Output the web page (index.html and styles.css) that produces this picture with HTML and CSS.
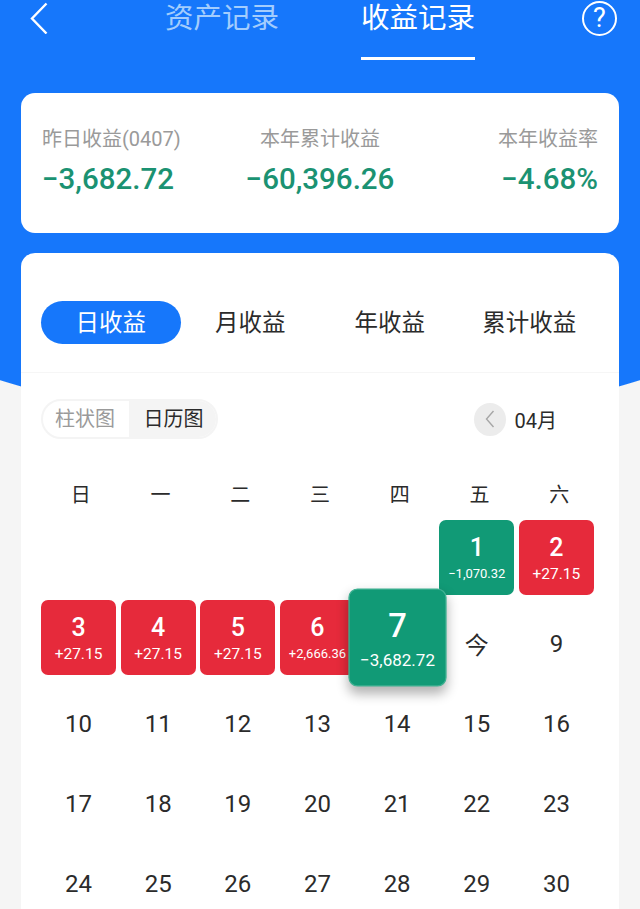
FILE: index.html
```html
<!DOCTYPE html>
<html lang="zh-CN">
<head>
  <meta charset="UTF-8">
  <meta name="viewport" content="width=device-width, initial-scale=1.0">
  <title>收益记录</title>
  <link rel="stylesheet" href="styles.css">
</head>
<body>
  <div class="header">
    <svg class="back-icon" viewBox="0 0 18 32" fill="none" stroke="white" stroke-width="2.4">
      <path d="M16.5 1.5L2 16.5l14.5 15"></path>
    </svg>
    <div class="header-tabs">
      <div class="header-tab">资产记录</div>
      <div class="header-tab active">收益记录</div>
    </div>
    <div class="help-icon">?</div>
  </div>

  <div class="summary card">
    <div class="summary-item">
      <div class="summary-label">昨日收益(0407)</div>
      <div class="summary-value">−3,682.72</div>
    </div>
    <div class="summary-item center">
      <div class="summary-label">本年累计收益</div>
      <div class="summary-value">−60,396.26</div>
    </div>
    <div class="summary-item right">
      <div class="summary-label">本年收益率</div>
      <div class="summary-value">−4.68%</div>
    </div>
  </div>

  <div class="calendar-card card">
    <div class="period-tabs">
      <div class="period-tab active">日收益</div>
      <div class="period-tab">月收益</div>
      <div class="period-tab">年收益</div>
      <div class="period-tab">累计收益</div>
    </div>

    <div class="controls">
      <div class="view-toggle">
        <div class="view-option">柱状图</div>
        <div class="view-option active">日历图</div>
      </div>
      <div class="month-picker">
        <div class="month-prev">
          <svg viewBox="0 0 12 20" fill="none" stroke="#a6a6a6" stroke-width="1.4">
            <path d="M9.5 2L2.5 10l7 8"></path>
          </svg>
        </div>
        <span>04月</span>
      </div>
    </div>

    <div class="weekdays">
      <span>日</span><span>一</span><span>二</span><span>三</span><span>四</span><span>五</span><span>六</span>
    </div>

    <div class="days">
      <div></div><div></div><div></div><div></div><div></div>
      <div class="day loss"><span class="day-num">1</span><span class="day-amt small">−1,070.32</span></div>
      <div class="day gain"><span class="day-num">2</span><span class="day-amt">+27.15</span></div>
      <div class="day gain"><span class="day-num">3</span><span class="day-amt">+27.15</span></div>
      <div class="day gain"><span class="day-num">4</span><span class="day-amt">+27.15</span></div>
      <div class="day gain"><span class="day-num">5</span><span class="day-amt">+27.15</span></div>
      <div class="day gain"><span class="day-num">6</span><span class="day-amt small">+2,666.36</span></div>
      <div class="day loss selected"><span class="day-num">7</span><span class="day-amt small">−3,682.72</span></div>
      <div class="day">今</div>
      <div class="day">9</div>
      <div class="day">10</div>
      <div class="day">11</div>
      <div class="day">12</div>
      <div class="day">13</div>
      <div class="day">14</div>
      <div class="day">15</div>
      <div class="day">16</div>
      <div class="day">17</div>
      <div class="day">18</div>
      <div class="day">19</div>
      <div class="day">20</div>
      <div class="day">21</div>
      <div class="day">22</div>
      <div class="day">23</div>
      <div class="day">24</div>
      <div class="day">25</div>
      <div class="day">26</div>
      <div class="day">27</div>
      <div class="day">28</div>
      <div class="day">29</div>
      <div class="day">30</div>
    </div>
  </div>
</body>
</html>
```

FILE: styles.css
```css
:root {
  --blue: #1677fb;
  --page-bg: #f5f5f5;
  --green: #119a76;
  --green-text: #1b9272;
  --red: #e62a3b;
  --text-color: #2b2b2b;
  --secondary-text: #9a9a9a;
}

* {
  margin: 0;
  padding: 0;
  box-sizing: border-box;
}

html,
body {
  height: 100%;
  overflow: hidden;
}

body {
  font-family: Roboto, "Noto Sans CJK SC", sans-serif;
  color: var(--text-color);
  /* blue top with a shallow curved edge */
  background: radial-gradient(circle at 320px -655px, var(--blue) 1083px, var(--page-bg) 1084px);
}

/* Header */
.header {
  height: 60px;
  display: flex;
  padding: 0 23px 0 30px;
}

.back-icon {
  width: 18px;
  height: 32px;
  margin-top: 2px;
}

.header-tabs {
  display: flex;
  gap: 82px;
  margin-left: 117px;
}

.header-tab {
  width: 114px;
  height: 60px;
  font-size: 28.5px;
  line-height: 38px;
  text-align: center;
  white-space: nowrap;
  color: #a3cdfd;
}

.header-tab.active {
  color: white;
  border-bottom: 3px solid white;
}

.help-icon {
  width: 35px;
  height: 35px;
  margin-top: 1px;
  margin-left: auto;
  border: 2.5px solid white;
  border-radius: 50%;
  color: white;
  font-size: 27px;
  line-height: 30px;
  text-align: center;
}

/* Cards */
.card {
  margin: 0 21px;
  background-color: white;
}

.summary {
  margin-top: 33px;
  height: 140px;
  padding: 30px 21px 0;
  display: grid;
  grid-template-columns: repeat(3, 1fr);
  border-radius: 14px;
}

.summary-item.center {
  text-align: center;
}

.summary-item.right {
  text-align: right;
}

.summary-label {
  font-size: 20px;
  line-height: 32px;
  color: var(--secondary-text);
  white-space: nowrap;
}

.summary-value {
  margin-top: 6px;
  font-size: 29.5px;
  font-weight: 500;
  line-height: 36px;
  color: var(--green-text);
  white-space: nowrap;
}

.calendar-card {
  margin-top: 20px;
  padding-top: 48px;
  border-radius: 14px 14px 0 0;
}

/* Period tabs */
.period-tabs {
  display: grid;
  grid-template-columns: repeat(4, 1fr);
  padding: 0 20px 28px;
  border-bottom: 1px solid #f6f6f6;
}

.period-tab {
  height: 43px;
  font-size: 23.5px;
  line-height: 44px;
  text-align: center;
  border-radius: 22px;
}

.period-tab.active {
  background-color: var(--blue);
  color: white;
}

/* Toggle and month */
.controls {
  display: flex;
  align-items: center;
  justify-content: space-between;
  margin-top: 26px;
  padding: 0 62px 0 20px;
}

.view-toggle {
  display: flex;
  height: 40px;
  border: 2px solid #f4f4f4;
  border-radius: 20px;
  overflow: hidden;
  font-size: 20px;
  line-height: 37px;
}

.view-option {
  width: 86px;
  padding-right: 2px;
  text-align: center;
  color: var(--secondary-text);
}

.view-option.active {
  width: 87px;
  padding: 0 0 0 2px;
  background-color: #f4f4f4;
  color: var(--text-color);
}

.month-picker {
  display: flex;
  align-items: center;
  gap: 9px;
  font-size: 20px;
}

.month-prev {
  width: 32px;
  height: 33px;
  display: flex;
  align-items: center;
  justify-content: center;
  border-radius: 50%;
  background-color: #ececec;
}

.month-prev svg {
  width: 12px;
  height: 20px;
}

/* Calendar */
.weekdays {
  display: grid;
  grid-template-columns: repeat(7, 1fr);
  margin-top: 41px;
  padding: 0 20px;
  font-size: 20px;
  line-height: 30px;
  text-align: center;
}

.days {
  display: grid;
  grid-template-columns: repeat(7, 75px);
  grid-auto-rows: 75px;
  justify-content: space-between;
  row-gap: 5px;
  margin-top: 10px;
  padding: 0 25px 0 20px;
}

.day {
  display: flex;
  flex-direction: column;
  align-items: center;
  justify-content: center;
  padding-top: 12px;
  font-size: 24px;
  white-space: nowrap;
}

.day.gain,
.day.loss {
  justify-content: flex-start;
  padding-top: 14px;
  border-radius: 7px;
  color: white;
}

.day.gain {
  background-color: var(--red);
}

.day.loss {
  background-color: var(--green);
}

.day-num {
  font-size: 25px;
  font-weight: 500;
  line-height: 28px;
}

.day-amt {
  margin-top: 2px;
  font-size: 15.5px;
  line-height: 20px;
}

.day-amt.small {
  font-size: 13px;
}

.day.selected {
  z-index: 1;
  transform: scale(1.31);
  border: 1px solid #3fb192;
  box-shadow: 0 5px 9px rgba(0, 0, 0, 0.3);
}
```
